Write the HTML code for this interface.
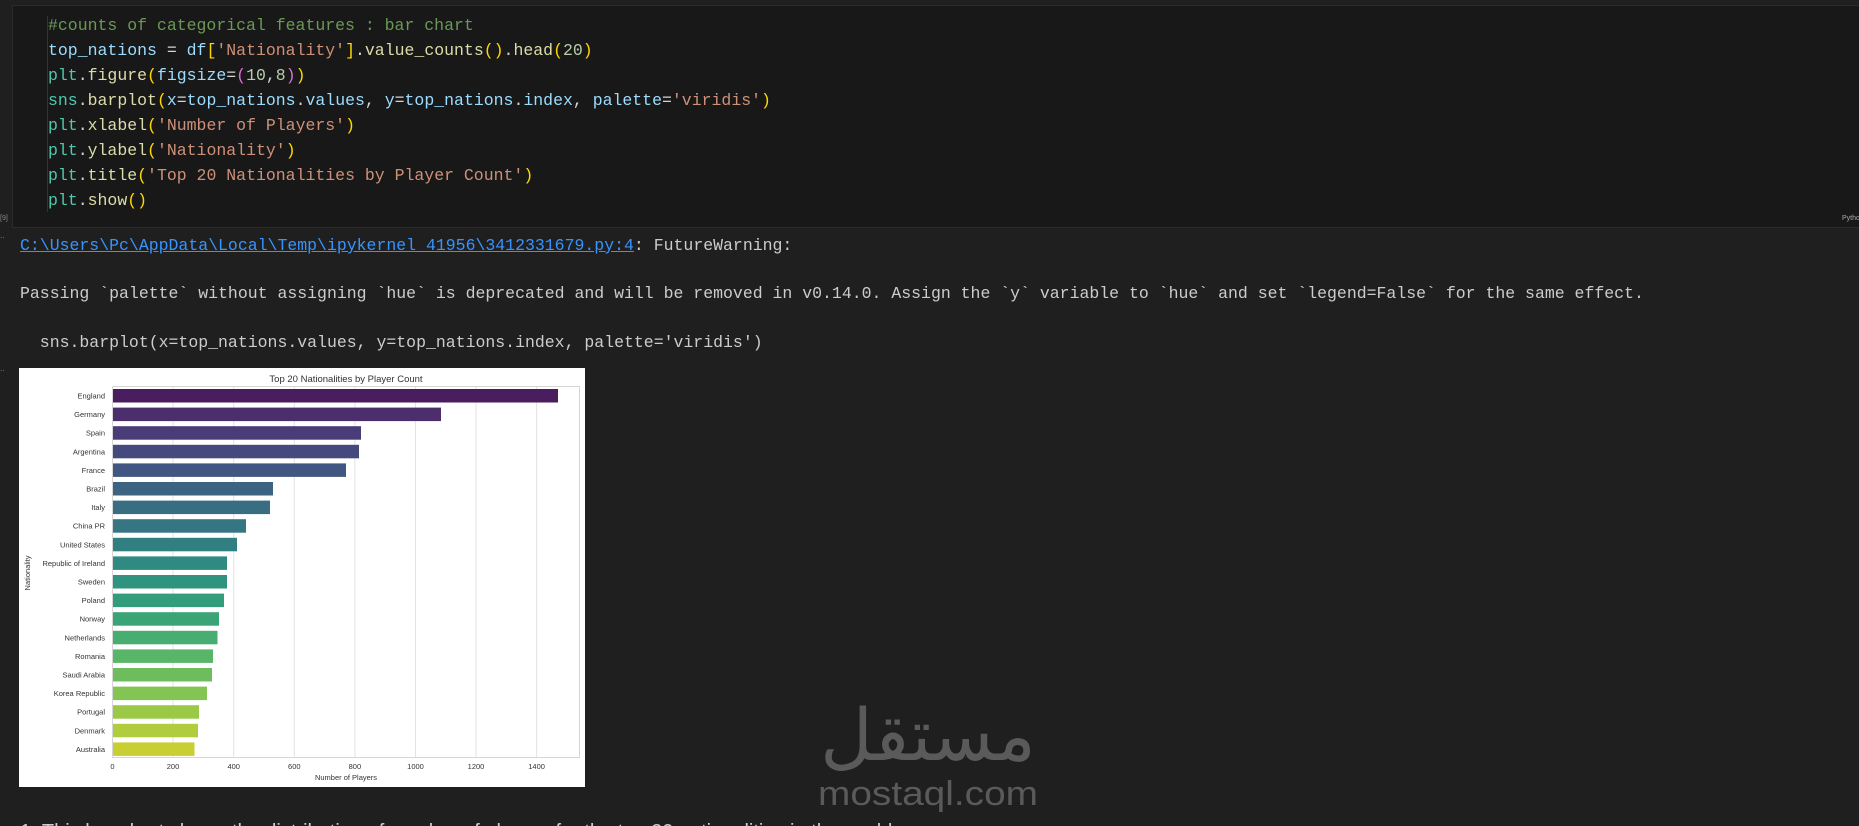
<!DOCTYPE html>
<html><head><meta charset="utf-8"><style>
html,body{margin:0;padding:0;background:#1f1f1f;width:1859px;height:826px;overflow:hidden;position:relative}
.mono{font-family:"Liberation Mono","DejaVu Sans Mono",monospace;font-size:16.5px;white-space:pre;position:absolute}
.cell{position:absolute;left:12px;top:5px;width:1860px;height:221px;background:#181818;border:1px solid #2b2b2b}
.guide{position:absolute;left:47px;top:16px;width:1px;height:196px;background:#333}
.c{color:#6a9955}.v{color:#9cdcfe}.s{color:#ce9178}.f{color:#4ec9b0}.y{color:#ffd700}.p{color:#da70d6}.w{color:#d4d4d4}.n{color:#b5cea8}.fn{color:#dcdcaa}
.out{color:#cccccc}
</style></head><body>
<div class="cell"></div>
<div class="guide"></div>
<div class="mono" style="left:48px;top:13px;line-height:25px;color:#d4d4d4"><span class="c">#counts of categorical features : bar chart</span>
<span class="v">top_nations</span> = <span class="v">df</span><span class="y">[</span><span class="s">'Nationality'</span><span class="y">]</span>.<span class="fn">value_counts</span><span class="y">()</span>.<span class="fn">head</span><span class="y">(</span><span class="n">20</span><span class="y">)</span>
<span class="f">plt</span>.<span class="fn">figure</span><span class="y">(</span><span class="v">figsize</span>=<span class="p">(</span><span class="n">10</span>,<span class="n">8</span><span class="p">)</span><span class="y">)</span>
<span class="f">sns</span>.<span class="fn">barplot</span><span class="y">(</span><span class="v">x</span>=<span class="v">top_nations</span>.<span class="v">values</span>, <span class="v">y</span>=<span class="v">top_nations</span>.<span class="v">index</span>, <span class="v">palette</span>=<span class="s">'viridis'</span><span class="y">)</span>
<span class="f">plt</span>.<span class="fn">xlabel</span><span class="y">(</span><span class="s">'Number of Players'</span><span class="y">)</span>
<span class="f">plt</span>.<span class="fn">ylabel</span><span class="y">(</span><span class="s">'Nationality'</span><span class="y">)</span>
<span class="f">plt</span>.<span class="fn">title</span><span class="y">(</span><span class="s">'Top 20 Nationalities by Player Count'</span><span class="y">)</span>
<span class="f">plt</span>.<span class="fn">show</span><span class="y">()</span></div>
<div style="position:absolute;left:0;top:215px;font:7px 'Liberation Sans',sans-serif;color:#888">[9]</div>
<div style="position:absolute;left:1842px;top:215px;font:7px 'Liberation Sans',sans-serif;color:#aaa">Pytho</div>
<div style="position:absolute;left:0;top:231px;font:8px 'Liberation Sans',sans-serif;color:#888">..</div>
<div class="mono out" style="left:20px;top:236px"><span style="color:#3794ff;text-decoration:underline">C:\Users\Pc\AppData\Local\Temp\ipykernel_41956\3412331679.py:4</span>: FutureWarning:</div>
<div class="mono out" style="left:20px;top:284px">Passing `palette` without assigning `hue` is deprecated and will be removed in v0.14.0. Assign the `y` variable to `hue` and set `legend=False` for the same effect.</div>
<div class="mono out" style="left:20px;top:333px">  sns.barplot(x=top_nations.values, y=top_nations.index, palette='viridis')</div>
<div style="position:absolute;left:0;top:364px;font:8px 'Liberation Sans',sans-serif;color:#888">..</div>
<svg style="position:absolute;left:19px;top:368px" width="566" height="419" viewBox="0 0 566 419" font-family="Liberation Sans, sans-serif">
<rect width="566" height="419" fill="#fff"/>
<g stroke="#e3e3e3" stroke-width="1">
<line x1="93.5" y1="18" x2="93.5" y2="389"/><line x1="154" y1="18" x2="154" y2="389"/><line x1="214.7" y1="18" x2="214.7" y2="389"/><line x1="275.3" y1="18" x2="275.3" y2="389"/><line x1="335.9" y1="18" x2="335.9" y2="389"/><line x1="396.5" y1="18" x2="396.5" y2="389"/><line x1="457" y1="18" x2="457" y2="389"/><line x1="517.6" y1="18" x2="517.6" y2="389"/>
</g>
<rect x="93.5" y="18.5" width="467" height="371" fill="none" stroke="#d6d6d6"/>
<text x="327" y="14" font-size="9.5" text-anchor="middle" fill="#333">Top 20 Nationalities by Player Count</text>
<g>
<rect x="94" y="21" width="445" height="13.5" fill="#4a1d5e"/>
<rect x="94" y="39.6" width="328" height="13.5" fill="#4c2e6c"/>
<rect x="94" y="58.2" width="248" height="13.5" fill="#4a3c78"/>
<rect x="94" y="76.8" width="246" height="13.5" fill="#454a7e"/>
<rect x="94" y="95.4" width="233" height="13.5" fill="#415781"/>
<rect x="94" y="114" width="160" height="13.5" fill="#3c6382"/>
<rect x="94" y="132.6" width="157" height="13.5" fill="#386d82"/>
<rect x="94" y="151.2" width="133" height="13.5" fill="#357682"/>
<rect x="94" y="169.8" width="124" height="13.5" fill="#327f82"/>
<rect x="94" y="188.4" width="114" height="13.5" fill="#2f8a81"/>
<rect x="94" y="207" width="114" height="13.5" fill="#2f937f"/>
<rect x="94" y="225.6" width="111" height="13.5" fill="#329c7b"/>
<rect x="94" y="244.2" width="106" height="13.5" fill="#3aa476"/>
<rect x="94" y="262.8" width="104.5" height="13.5" fill="#48ad70"/>
<rect x="94" y="281.4" width="100" height="13.5" fill="#59b568"/>
<rect x="94" y="300" width="99" height="13.5" fill="#6dbd5e"/>
<rect x="94" y="318.6" width="94" height="13.5" fill="#83c553"/>
<rect x="94" y="337.2" width="86" height="13.5" fill="#9bc947"/>
<rect x="94" y="355.8" width="85" height="13.5" fill="#b1cc3c"/>
<rect x="94" y="374.4" width="81.5" height="13.5" fill="#c8cf32"/>
</g>
<g font-size="7.5" fill="#333" text-anchor="end">
<text x="86" y="30.5">England</text><text x="86" y="49.1">Germany</text><text x="86" y="67.7">Spain</text><text x="86" y="86.3">Argentina</text><text x="86" y="104.9">France</text><text x="86" y="123.5">Brazil</text><text x="86" y="142.1">Italy</text><text x="86" y="160.7">China PR</text><text x="86" y="179.3">United States</text><text x="86" y="197.9">Republic of Ireland</text><text x="86" y="216.5">Sweden</text><text x="86" y="235.1">Poland</text><text x="86" y="253.7">Norway</text><text x="86" y="272.3">Netherlands</text><text x="86" y="290.9">Romania</text><text x="86" y="309.5">Saudi Arabia</text><text x="86" y="328.1">Korea Republic</text><text x="86" y="346.7">Portugal</text><text x="86" y="365.3">Denmark</text><text x="86" y="383.9">Australia</text>
</g>
<g font-size="7.5" fill="#333" text-anchor="middle">
<text x="93.5" y="401">0</text><text x="154" y="401">200</text><text x="214.7" y="401">400</text><text x="275.3" y="401">600</text><text x="335.9" y="401">800</text><text x="396.5" y="401">1000</text><text x="457" y="401">1200</text><text x="517.6" y="401">1400</text>
<text x="327" y="412">Number of Players</text>
</g>
<text transform="translate(11,205) rotate(-90)" font-size="7.5" fill="#333" text-anchor="middle">Nationality</text>
</svg>
<div dir="rtl" style="position:absolute;left:808px;top:690px;width:240px;text-align:center;font:72px/90px 'DejaVu Sans',sans-serif;color:#5a5a5a;white-space:nowrap">مستقل</div>
<svg style="position:absolute;left:810px;top:770px" width="240" height="42" viewBox="0 0 240 42">
<text x="8" y="35" font-family="Liberation Sans, sans-serif" font-size="34" fill="#5a5a5a" textLength="220" lengthAdjust="spacingAndGlyphs">mostaql.com</text>
</svg>
<div style="position:absolute;left:20px;top:822px;font:20px/20px 'Liberation Sans',sans-serif;color:#cccccc;white-space:nowrap">1. This bar chart shows the distribution of number of players for the top 20 nationalities in the world</div>
</body></html>
